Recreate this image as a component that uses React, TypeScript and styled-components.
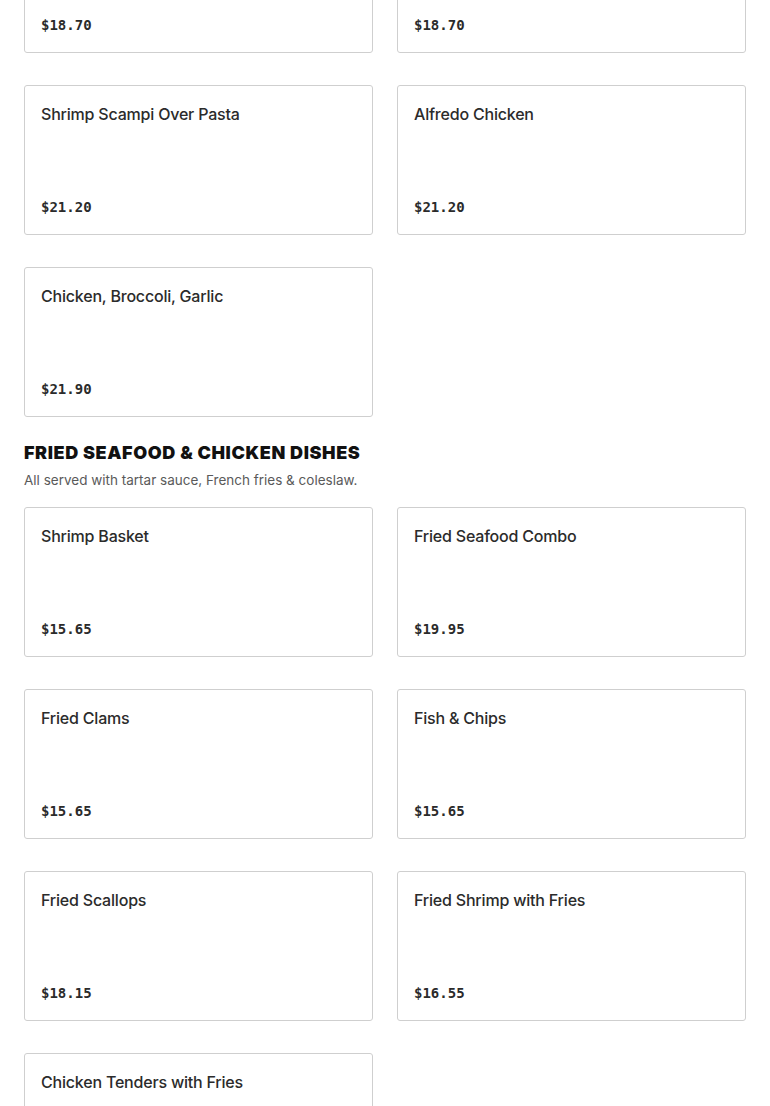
import React from 'react'
import { styled, createGlobalStyle } from 'styled-components'

type Dish = { name: string; price: string }
type Section = { title?: string; note?: string; dishes: Dish[] }

const SECTIONS: Section[] = [
    {
        dishes: [
            { name: 'Chicken Parmesan Over Pasta', price: '$18.70' },
            { name: 'Eggplant Parmesan Over Pasta', price: '$18.70' },
            { name: 'Shrimp Scampi Over Pasta', price: '$21.20' },
            { name: 'Alfredo Chicken', price: '$21.20' },
            { name: 'Chicken, Broccoli, Garlic', price: '$21.90' },
        ],
    },
    {
        title: 'FRIED SEAFOOD & CHICKEN DISHES',
        note: 'All served with tartar sauce, French fries & coleslaw.',
        dishes: [
            { name: 'Shrimp Basket', price: '$15.65' },
            { name: 'Fried Seafood Combo', price: '$19.95' },
            { name: 'Fried Clams', price: '$15.65' },
            { name: 'Fish & Chips', price: '$15.65' },
            { name: 'Fried Scallops', price: '$18.15' },
            { name: 'Fried Shrimp with Fries', price: '$16.55' },
            { name: 'Chicken Tenders with Fries', price: '$16.55' },
        ],
    },
]

export default function App() {
    return (
        <>
            <GlobalStyle />
            <Page>
                {SECTIONS.map((section, i) => (
                    <SectionBlock key={i}>
                        {section.title && (
                            <Header>
                                <Heading>{section.title}</Heading>
                                {section.note && <Note>{section.note}</Note>}
                            </Header>
                        )}
                        <Grid>
                            {section.dishes.map((dish) => (
                                <Card key={dish.name}>
                                    <DishName>{dish.name}</DishName>
                                    <Price>{dish.price}</Price>
                                </Card>
                            ))}
                        </Grid>
                    </SectionBlock>
                ))}
            </Page>
        </>
    )
}

const GlobalStyle = createGlobalStyle`
    html, body {
        margin: 0;
        padding: 0;
        background: #fff;
        overflow: hidden;
    }
    body {
        font-family: Inter, 'Noto Sans', sans-serif;
        color: #2b2b2b;
    }
`

// page is shown scrolled part way down the menu
const Page = styled.main`
    margin-top: -97px;
    padding: 0 24px;
    display: flex;
    flex-direction: column;
    gap: 23px;
`

const SectionBlock = styled.section`
    display: flex;
    flex-direction: column;
`

const Header = styled.header`
    display: flex;
    flex-direction: column;
    gap: 5px;
    margin-bottom: 17px;
`

const Heading = styled.h2`
    margin: 0;
    font-family: Inter, sans-serif;
    font-size: 18px;
    line-height: 25px;
    font-weight: 900;
    letter-spacing: 0.6px;
    color: #111;
`

const Note = styled.p`
    margin: 0;
    font-size: 13.5px;
    line-height: 20px;
    color: #5a5a5a;
`

const Grid = styled.div`
    display: grid;
    grid-template-columns: 1fr 1fr;
    column-gap: 24px;
    row-gap: 32px;
`

const Card = styled.div`
    box-sizing: border-box;
    height: 150px;
    padding: 16px 16px 17px;
    border: 1px solid #cfcfcf;
    border-radius: 3px;
    display: flex;
    flex-direction: column;
    justify-content: space-between;
`

const DishName = styled.h3`
    margin: 0;
    font-size: 16px;
    line-height: 24px;
    font-weight: 500;
    letter-spacing: -0.2px;
    color: #2b2b2b;
`

const Price = styled.span`
    font-family: 'DejaVu Sans Mono', 'Liberation Mono', monospace;
    font-size: 14px;
    line-height: 20px;
    font-weight: 700;
    color: #2b2b2b;
`
